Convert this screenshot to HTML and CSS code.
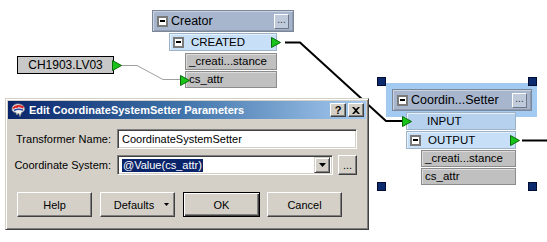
FILE: index.html
```html
<!DOCTYPE html>
<html>
<head>
<meta charset="utf-8">
<link rel="stylesheet" href="styles.css">
</head>
<body>
<div class="canvas">
  <svg class="links" width="547" height="242" viewBox="0 0 547 242">
    <polyline class="link-thin" points="120,65.5 137,65.5 163,79.5 181,79.5"/>
    <polyline class="link" points="285,42.5 300,42.5 386,121 402,121"/>
    <polyline class="link" points="522,140.5 547,140.5"/>
  </svg>

  <div class="source">
    <span>CH1903.LV03</span>
    <svg class="port port-out" viewBox="0 0 10 11"><polygon points="0.5,0.5 9.5,5.5 0.5,10.5"/></svg>
  </div>

  <div class="node n-creator">
    <div class="node-head">
      <span class="minus"></span>
      <span class="node-title">Creator</span>
      <span class="dots">...</span>
    </div>
    <div class="port-row">
      <span class="minus"></span>
      <span class="row-label">CREATED</span>
      <svg class="port port-out" viewBox="0 0 10 11"><polygon points="0.5,0.5 9.5,5.5 0.5,10.5"/></svg>
    </div>
    <div class="attrs">
      <div class="attr">_creati...stance</div>
      <div class="attr">
        <svg class="port port-in" viewBox="0 0 10 11"><polygon points="0.5,0.5 9.5,5.5 0.5,10.5"/></svg>
        cs_attr
      </div>
    </div>
  </div>

  <div class="halo"></div>
  <div class="node n-setter">
    <div class="node-head">
      <span class="minus"></span>
      <span class="node-title">Coordin...Setter</span>
      <span class="dots">...</span>
    </div>
    <div class="port-row in-row">
      <svg class="port port-in" viewBox="0 0 10 11"><polygon points="0.5,0.5 9.5,5.5 0.5,10.5"/></svg>
      <span class="row-label">INPUT</span>
    </div>
    <div class="port-row">
      <span class="minus"></span>
      <span class="row-label">OUTPUT</span>
      <svg class="port port-out" viewBox="0 0 10 11"><polygon points="0.5,0.5 9.5,5.5 0.5,10.5"/></svg>
    </div>
    <div class="attrs">
      <div class="attr">_creati...stance</div>
      <div class="attr">cs_attr</div>
    </div>
  </div>
  <span class="handle h-tl"></span>
  <span class="handle h-tr"></span>
  <span class="handle h-bl"></span>
  <span class="handle h-br"></span>

  <div class="dialog">
    <div class="titlebar">
      <svg class="app-icon" width="16" height="16" viewBox="0 0 16 16">
        <path d="M2 7 C2 3 6 1.5 9 2 C12 2.5 14.5 4 14.5 7 C14.5 9 13 10 11.5 10.5 L10 14.5 L8.5 11 L6.5 13 L6 10.5 C3.5 10.5 2 9 2 7 Z" fill="#f2f2f2" stroke="#8c8c8c" stroke-width="0.8"/>
        <path d="M3 6.5 C5 4 9 3.5 13.5 5.5" stroke="#d8262b" stroke-width="2" fill="none"/>
        <path d="M4 8.5 C6.5 7 10 7 13 8" stroke="#2c49a8" stroke-width="1.6" fill="none"/>
        <circle cx="7" cy="5" r="1" fill="#d8262b"/>
      </svg>
      <span class="title-text">Edit CoordinateSystemSetter Parameters</span>
      <span class="cap-btn help-btn">?</span>
      <span class="cap-btn close-btn">
        <svg width="8" height="7" viewBox="0 0 8 7"><path d="M0 0h2l2 2 2-2h2L5 3.5 8 7H6L4 5 2 7H0l3-3.5z" fill="#000"/></svg>
      </span>
    </div>
    <div class="dlg-body">
      <div class="form">
        <label class="lbl">Transformer Name:</label>
        <div class="field">CoordinateSystemSetter</div>
        <label class="lbl">Coordinate System:</label>
        <div class="combo-line">
          <div class="combo">
            <span class="sel">@Value(cs_attr)</span>
            <span class="drop"><svg width="7" height="4" viewBox="0 0 7 4"><path d="M0 0h7L3.5 4z" fill="#000"/></svg></span>
          </div>
          <span class="btn small-btn">...</span>
        </div>
      </div>
      <div class="buttons">
        <span class="btn">Help</span>
        <span class="btn defaults">Defaults <svg width="5" height="3" viewBox="0 0 5 3"><path d="M0 0h5L2.5 3z" fill="#000"/></svg></span>
        <span class="btn default-btn">OK</span>
        <span class="btn">Cancel</span>
      </div>
    </div>
  </div>
</div>
</body>
</html>
```

FILE: styles.css
```css
html, body {
  margin: 0;
  padding: 0;
  background: #ffffff;
}

.canvas {
  position: relative;
  width: 547px;
  height: 242px;
  overflow: hidden;
  background: #ffffff;
  font-family: "Liberation Sans", Arial, sans-serif;
  color: #000;
}

.links {
  position: absolute;
  left: 0;
  top: 0;
}

.link {
  fill: none;
  stroke: #000;
  stroke-width: 2;
}

.link-thin {
  fill: none;
  stroke: #a0a0a0;
  stroke-width: 1;
}

/* ports */
.port {
  position: absolute;
  width: 10px;
  height: 11px;
}

.port polygon {
  fill: #19c419;
  stroke: #0b6b0b;
  stroke-width: 1;
}

/* source feature */
.source {
  position: absolute;
  left: 17px;
  top: 56px;
  width: 97px;
  height: 18px;
  box-sizing: border-box;
  border: 1px solid #000;
  background: #c8c8c8;
  display: flex;
  align-items: center;
  justify-content: center;
  font-size: 12px;
}

.source .port-out {
  right: -9px;
  top: 3px;
}

/* transformer nodes */
.node {
  position: absolute;
  display: flex;
  flex-direction: column;
  gap: 1px;
  font-size: 11.5px;
}

.n-creator {
  left: 152px;
  top: 10px;
  width: 142px;
}

.n-setter {
  left: 392px;
  top: 89px;
  width: 140px;
}

.node-head {
  height: 22px;
  box-sizing: border-box;
  background: #a7b6cd;
  border: 1px solid #7c8798;
  box-shadow: inset 1px 1px #c9d3e1, inset -1px -1px #8f9bb0;
  display: flex;
  align-items: center;
  padding: 0 4px 0 4px;
}

.node-title {
  font-size: 12.5px;
  margin-left: 3px;
  white-space: nowrap;
}

.dots {
  margin-left: auto;
  width: 15px;
  height: 15px;
  box-sizing: border-box;
  border: 1px solid;
  border-color: #ffffff #6e7787 #6e7787 #ffffff;
  background: #bfcadb;
  font-size: 10px;
  line-height: 9px;
  text-align: center;
  color: #333;
}

.minus {
  flex: none;
  width: 11px;
  height: 11px;
  box-sizing: border-box;
  border: 2px solid #7a7a7a;
  background: #ffffff;
  position: relative;
}

.minus::after {
  content: "";
  position: absolute;
  left: 1px;
  top: 2px;
  width: 5px;
  height: 2px;
  background: #000;
}

.port-row {
  position: relative;
  height: 18px;
  box-sizing: border-box;
  margin-left: 17px;
  width: 108px;
  background: #c7e0f8;
  border: 1px solid #9fb3c8;
  box-shadow: inset 1px 1px #e4f0fc;
  display: flex;
  align-items: center;
  padding-left: 3px;
}

.n-setter .port-row {
  margin-left: 14px;
  width: 110px;
}

.in-row {
  background: #b5d1ee;
  padding-left: 20px;
}

.row-label {
  margin-left: 7px;
}

.in-row .row-label {
  margin-left: 0;
}

.port-row .port-out {
  right: -5px;
  top: 3px;
}

.port-row .port-in {
  left: -5px;
  top: 3px;
}

.attrs {
  margin-left: 33px;
  width: 92px;
  display: flex;
  flex-direction: column;
  gap: 1px;
  margin-top: 1px;
}

.n-setter .attrs {
  margin-left: 29px;
  width: 95px;
  margin-top: 0;
}

.attr {
  position: relative;
  height: 17px;
  box-sizing: border-box;
  background: #c0c0c0;
  border: 1px solid #8c8c8c;
  box-shadow: inset 1px 1px #dcdcdc;
  padding-left: 3px;
  line-height: 15px;
  white-space: nowrap;
}

.attr .port-in {
  left: -6px;
  top: 3px;
}

/* selection */
.halo {
  position: absolute;
  left: 386px;
  top: 83px;
  width: 151px;
  height: 34px;
  background: #a3cbf2;
}

.handle {
  position: absolute;
  width: 9px;
  height: 9px;
  box-sizing: border-box;
  background: #0c2a6e;
  border: 1px solid #000c30;
}

.h-tl { left: 377px; top: 77px; }
.h-tr { left: 528px; top: 77px; }
.h-bl { left: 377px; top: 182px; }
.h-br { left: 528px; top: 182px; }

/* dialog */
.dialog {
  position: absolute;
  left: 5px;
  top: 98px;
  width: 364px;
  height: 132px;
  box-sizing: border-box;
  background: #d4d0c8;
  border: 1px solid;
  border-color: #d4d0c8 #404040 #404040 #d4d0c8;
  box-shadow: inset 1px 1px #ffffff, inset -1px -1px #808080;
  padding: 2px;
  font-family: "Liberation Sans", Arial, sans-serif;
  font-size: 11px;
}

.titlebar {
  height: 18px;
  background: linear-gradient(to right, #0a246a 0%, #3a6ea5 45%, #a6caf0 100%);
  display: flex;
  align-items: center;
  padding: 0 2px 0 2px;
}

.app-icon {
  flex: none;
}

.title-text {
  margin-left: 3px;
  color: #fff;
  font-weight: bold;
  font-size: 11px;
  white-space: nowrap;
}

.cap-btn {
  width: 16px;
  height: 14px;
  box-sizing: border-box;
  background: #d4d0c8;
  border: 1px solid;
  border-color: #ffffff #404040 #404040 #ffffff;
  box-shadow: inset -1px -1px #808080;
  display: flex;
  align-items: center;
  justify-content: center;
  font-weight: bold;
  font-size: 11px;
  line-height: 1;
}

.help-btn {
  margin-left: auto;
}

.close-btn {
  margin-left: 2px;
}

.dlg-body {
  padding: 10px 9px 0 0;
}

.form {
  display: grid;
  grid-template-columns: 103px 240px;
  grid-auto-rows: 20px;
  row-gap: 6px;
  column-gap: 6px;
  align-items: center;
}

.lbl {
  text-align: right;
  white-space: nowrap;
}

.field,
.combo {
  height: 20px;
  box-sizing: border-box;
  background: #fff;
  border: 1px solid;
  border-color: #808080 #ffffff #ffffff #808080;
  box-shadow: inset 1px 1px #404040, inset -1px -1px #d4d0c8;
  display: flex;
  align-items: center;
  padding-left: 4px;
  white-space: nowrap;
}

.combo-line {
  display: flex;
  align-items: center;
  gap: 5px;
}

.combo {
  width: 216px;
  padding-left: 4px;
  padding-right: 2px;
}

.sel {
  background: #0a246a;
  color: #fff;
  padding: 0 1px;
  line-height: 13px;
}

.drop {
  margin-left: auto;
  width: 16px;
  height: 16px;
  box-sizing: border-box;
  background: #d4d0c8;
  border: 1px solid;
  border-color: #d4d0c8 #404040 #404040 #d4d0c8;
  box-shadow: inset 1px 1px #fff, inset -1px -1px #808080;
  display: flex;
  align-items: center;
  justify-content: center;
}

.btn {
  width: 75px;
  height: 25px;
  box-sizing: border-box;
  background: #d4d0c8;
  border: 1px solid;
  border-color: #ffffff #404040 #404040 #ffffff;
  box-shadow: inset -1px -1px #808080;
  display: flex;
  align-items: center;
  justify-content: center;
  gap: 10px;
}

.small-btn {
  width: 19px;
  height: 20px;
  line-height: 1;
}

.buttons {
  display: flex;
  align-items: center;
  margin-top: 17px;
  padding-left: 9px;
}

.buttons .btn + .btn {
  margin-left: 8px;
}

.buttons .default-btn {
  margin-left: 22px;
  width: 77px;
  border: 1px solid #000;
  box-shadow: inset 1px 1px #fff, inset -1px -1px #404040, inset -2px -2px #808080;
}

.buttons .default-btn + .btn {
  margin-left: 7px;
}

.defaults {
  padding-left: 8px;
}
```
